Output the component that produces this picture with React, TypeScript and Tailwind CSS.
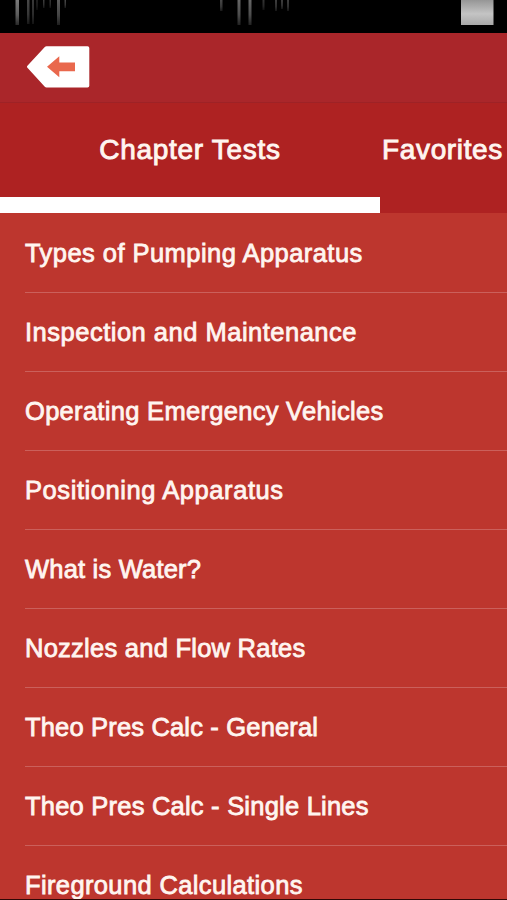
import React, { useState } from 'react';

interface Streak {
  x: number;
  w: number;
  h: number;
  o: number;
}

const STREAKS: Streak[] = [
  { x: 15.5, w: 3.5, h: 25, o: 0.6 },
  { x: 27, w: 2.5, h: 24, o: 0.35 },
  { x: 32, w: 2, h: 24, o: 0.28 },
  { x: 36.5, w: 1, h: 10, o: 0.3 },
  { x: 43, w: 1.5, h: 8, o: 0.3 },
  { x: 49.5, w: 1.5, h: 8, o: 0.25 },
  { x: 57, w: 3, h: 25, o: 0.45 },
  { x: 64.5, w: 1.5, h: 8, o: 0.35 },
  { x: 220, w: 2.5, h: 11, o: 0.35 },
  { x: 237.5, w: 3, h: 25, o: 0.5 },
  { x: 248.5, w: 3, h: 25, o: 0.5 },
  { x: 262.5, w: 2, h: 10, o: 0.25 },
  { x: 275, w: 2, h: 11, o: 0.3 },
  { x: 281, w: 2, h: 9, o: 0.3 },
  { x: 287, w: 2, h: 11, o: 0.3 },
];

const TABS = [
  { label: 'Chapter Tests', style: 'items-center tracking-[0.7px]' },
  { label: 'Favorites', style: 'items-start pl-0.5 tracking-[0.65px]' },
];

const CHAPTERS = [
  { title: 'Types of Pumping Apparatus', tracking: 'tracking-[0.45px]' },
  { title: 'Inspection and Maintenance', tracking: 'tracking-[0.5px]' },
  { title: 'Operating Emergency Vehicles', tracking: 'tracking-[0.3px]' },
  { title: 'Positioning Apparatus', tracking: 'tracking-[0.57px]' },
  { title: 'What is Water?', tracking: 'tracking-[0.2px]' },
  { title: 'Nozzles and Flow Rates', tracking: 'tracking-[0.25px]' },
  { title: 'Theo Pres Calc - General', tracking: 'tracking-[0.17px]' },
  { title: 'Theo Pres Calc - Single Lines', tracking: 'tracking-[0.22px]' },
  { title: 'Fireground Calculations', tracking: 'tracking-[0.37px]' },
];

const StatusBar: React.FC = () => (
  <div className="h-[33px] flex-shrink-0 bg-black">
    <svg width="507" height="33" viewBox="0 0 507 33">
      <defs>
        <linearGradient id="streak" x1="0" y1="0" x2="0" y2="1">
          <stop offset="0" stopColor="#ccc" />
          <stop offset="0.6" stopColor="#999" />
          <stop offset="1" stopColor="#444" />
        </linearGradient>
        <linearGradient id="battery" x1="0" y1="0" x2="0" y2="1">
          <stop offset="0" stopColor="#969696" />
          <stop offset="0.55" stopColor="#c4c4c4" />
          <stop offset="1" stopColor="#a8a8a8" />
        </linearGradient>
      </defs>
      {STREAKS.map(s => (
        <rect key={s.x} x={s.x} y="0" width={s.w} height={s.h} fill="url(#streak)" opacity={s.o} />
      ))}
      <rect x="461" y="0" width="32.5" height="25" fill="url(#battery)" />
    </svg>
  </div>
);

export default function App() {
  const [activeTab, setActiveTab] = useState(0);

  return (
    <div className="flex h-[900px] w-[507px] flex-col overflow-hidden border-b border-[#300806] bg-[#bd362e] font-['Liberation_Sans',Arial,sans-serif] text-[#fff5f0]">
      <StatusBar />

      <header className="flex h-[70px] flex-shrink-0 items-start border-b border-[#9e2226] bg-[#aa262a] pl-[26px] pt-[13px]">
        <button aria-label="Back">
          <svg width="64" height="42" viewBox="0 0 64 42" className="block">
            <path d="M20.500 0.200H61.500Q63.300 0.200 63.300 2V39.700Q63.300 41.500 61.500 41.500H20.500Q19.500 41.500 18.800 40.700L1.200 21.500Q0.700 20.700 1.200 20L18.800 1Q19.500 0.200 20.500 0.200Z" fill="#fff" />
            <path d="M21 20.700L33.300 10.300V16.500H49V25.300H33.300V31.300Z" fill="#e9684d" />
          </svg>
        </button>
      </header>

      <nav className="flex h-[110px] flex-shrink-0 bg-[#ae2222]">
        {TABS.map(({ label, style }, i) => (
          <button
            key={label}
            onClick={() => setActiveTab(i)}
            className={`flex h-full w-[380px] flex-shrink-0 flex-col justify-between pt-[29px] text-[28px] leading-9 [-webkit-text-stroke:0.9px_currentColor] ${style}`}
          >
            <span className="whitespace-nowrap">{label}</span>
            {i === activeTab && <span className="h-4 w-full bg-white" />}
          </button>
        ))}
      </nav>

      <ul className="flex flex-col pl-[25px] pt-px">
        {CHAPTERS.map(({ title, tracking }) => (
          <li
            key={title}
            className={`flex h-[79px] flex-shrink-0 items-center whitespace-nowrap border-b border-[#cb605b] text-[25.5px] [-webkit-text-stroke:0.8px_currentColor] ${tracking}`}
          >
            {title}
          </li>
        ))}
      </ul>
    </div>
  );
}
